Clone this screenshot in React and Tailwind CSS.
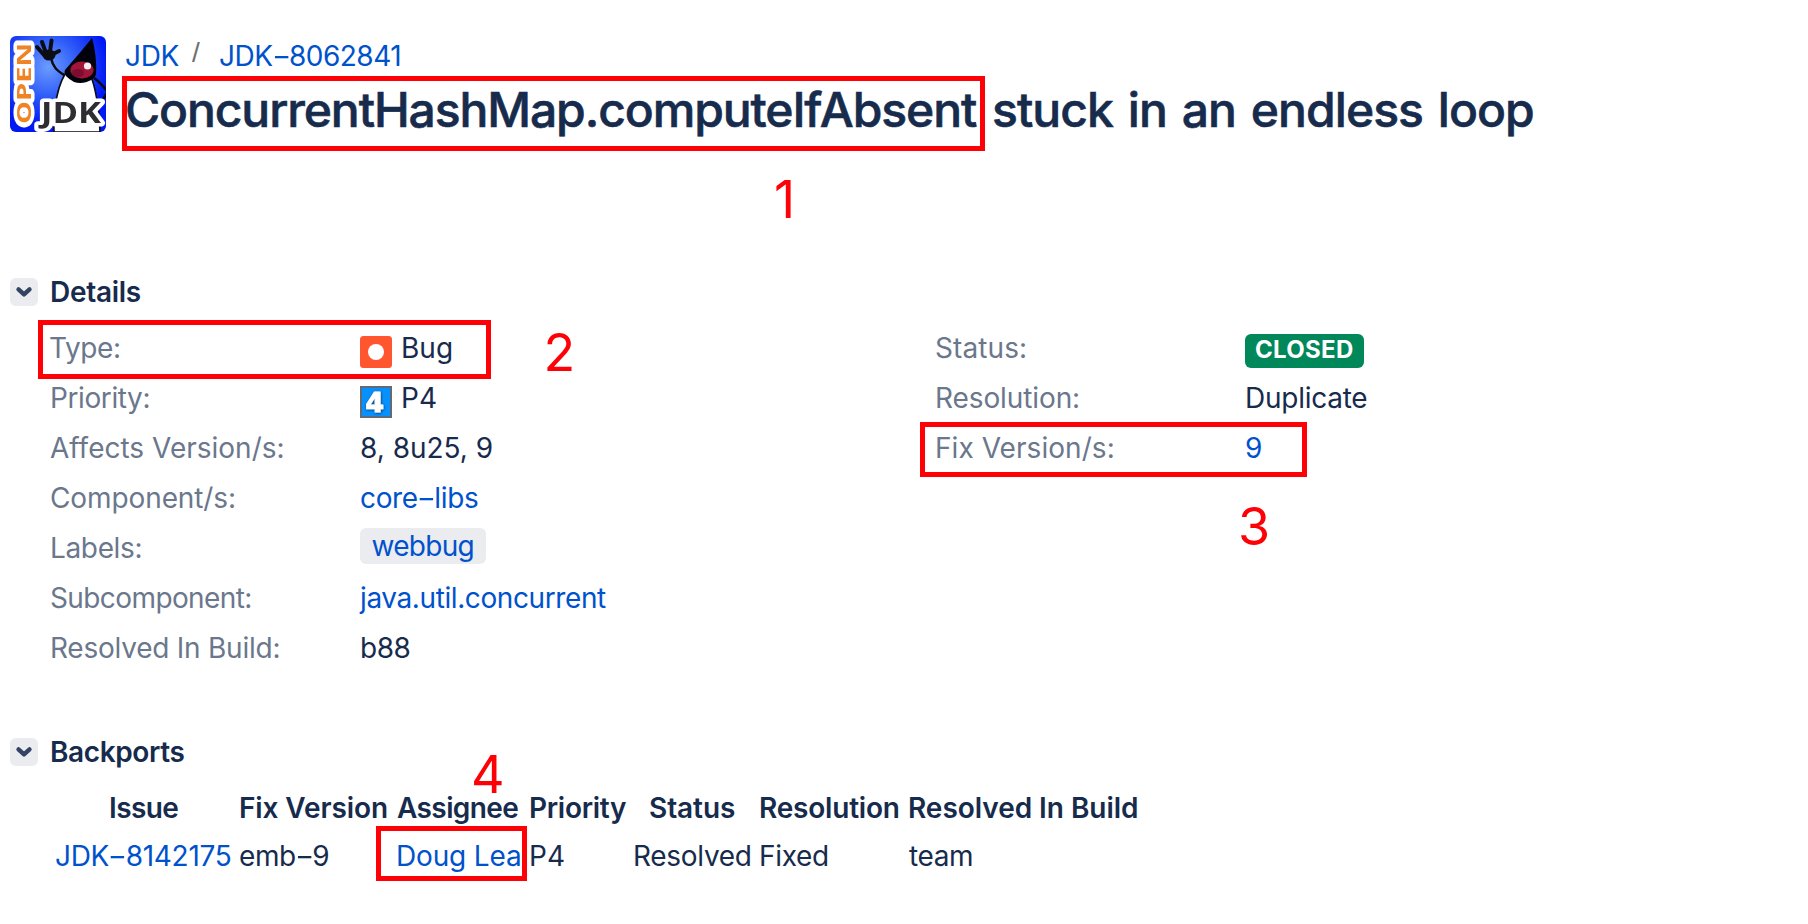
import React from "react";

const LINK = "text-[#0052cc]";

// A hyphen drawn wider than the typeface's own.
function Dash() {
  return <span className="mx-[2px] inline-block scale-x-150">-</span>;
}

function ProjectLogo() {
  return (
    <svg width="96" height="96" viewBox="0 0 96 96" className="shrink-0 rounded-md">
      <defs>
        <radialGradient id="sky" cx="0.4" cy="0.32" r="0.62">
          <stop offset="0" stopColor="#6c9cff" />
          <stop offset="0.5" stopColor="#2f5cf8" />
          <stop offset="1" stopColor="#0018f4" />
        </radialGradient>
        <filter id="soft" x="-10%" y="-10%" width="120%" height="120%">
          <feGaussianBlur stdDeviation="0.6" />
        </filter>
      </defs>
      <rect width="96" height="96" fill="url(#sky)" />
      <g filter="url(#soft)">
        <path d="M44 96 C43 72 48 46 58 34 L80 38 C86 52 89 74 90 96 Z" fill="#fff" stroke="#0a0a18" strokeWidth="1.600" />
        <path d="M82 2 C74 12 62 26 55 34 C53 39 58 42 64 46 C74 49 85 44 86 38 C87 28 85 12 82 2 Z" fill="#050508" />
        <path d="M84 42 C90 46 93 50 98 56 M90 68 L98 56" fill="none" stroke="#08080c" strokeWidth="2.600" />
        <path d="M41 22 C43 32 48 35 54 39" fill="none" stroke="#08080c" strokeWidth="2.400" />
        <path
          d="M34 19 L27 11 M36 17 L32 6 M40 16 L41.500 4.500 M43 18 L49 15"
          fill="none"
          stroke="#101018"
          strokeWidth="4"
          strokeLinecap="round"
        />
        <ellipse cx="39" cy="19" rx="6.500" ry="5.500" fill="#101018" />
        <ellipse cx="72" cy="34" rx="11.500" ry="8.500" fill="#a01238" />
        <ellipse cx="68" cy="37" rx="6" ry="4" fill="#7d0c2e" />
        <circle cx="77.500" cy="30" r="3.600" fill="#f4eef2" />
        <text
          transform="translate(21 88) rotate(-90)"
          textLength="81"
          lengthAdjust="spacingAndGlyphs"
          fontSize="20"
          fontWeight="700"
          fill="#ee8426"
          stroke="#fff"
          strokeWidth="7"
          strokeLinejoin="round"
          paintOrder="stroke"
          className="font-['Open_Sans',sans-serif]"
        >
          OPEN
        </text>
        <text
          x="31"
          y="87"
          textLength="60"
          lengthAdjust="spacingAndGlyphs"
          fontSize="29"
          fontWeight="700"
          fill="#2e2e32"
          stroke="#fff"
          strokeWidth="7"
          strokeLinejoin="round"
          paintOrder="stroke"
          className="font-['Open_Sans',sans-serif]"
        >
          JDK
        </text>
      </g>
    </svg>
  );
}

function SectionHeading({ children, tracking }) {
  return (
    <div className="flex h-[34px] items-center pl-[10px]">
      <button className="flex size-7 items-center justify-center rounded-md bg-[#ebecf0]">
        <svg width="28" height="28" viewBox="0 0 28 28" fill="none" stroke="#344563" strokeWidth="4.400" strokeLinecap="round" strokeLinejoin="round">
          <path d="M8.500 11.400 L14 16.400 L19.500 11.400" />
        </svg>
      </button>
      <h2 className={`ml-3 font-semibold leading-[34px] ${tracking}`}>{children}</h2>
    </div>
  );
}

function Row({ label, tracking = "", children }) {
  return (
    <div className="flex h-[50px] items-center">
      <dt className={`w-[310px] shrink-0 text-[#6b778c] ${tracking}`}>{label}</dt>
      <dd className="flex items-center">{children}</dd>
    </div>
  );
}

function BugIcon() {
  return (
    <svg width="32" height="32" viewBox="0 0 32 32" className="mr-[9px] translate-y-1">
      <rect width="32" height="32" rx="3.500" fill="#ff5630" />
      <circle cx="16" cy="16" r="8" fill="#fff" />
    </svg>
  );
}

function PriorityIcon() {
  return (
    <svg width="32" height="32" viewBox="0 0 32 32" className="mr-[9px] translate-y-1">
      <defs>
        <filter id="glow" x="-30%" y="-30%" width="160%" height="160%">
          <feDropShadow dx="0.4" dy="0.6" stdDeviation="1.1" floodColor="#0b2c4a" floodOpacity="1" />
        </filter>
      </defs>
      <rect x="1" y="1" width="30" height="30" fill="#0791ff" stroke="#5f6b78" strokeWidth="2" />
      <text
        x="5.500"
        y="25.500"
        textLength="18.500"
        lengthAdjust="spacingAndGlyphs"
        fontSize="27"
        fontWeight="700"
        fill="#fff"
        stroke="#fff"
        strokeWidth="1.200"
        strokeLinejoin="round"
        filter="url(#glow)"
        className="font-['DejaVu_Sans',sans-serif]"
      >
        4
      </text>
    </svg>
  );
}

function Marker({ box, digit, children }) {
  return (
    <>
      <div className={`pointer-events-none absolute border-[5px] border-[#ff0006] ${box}`} />
      <span className={`pointer-events-none absolute text-[52px] leading-none text-[#ff0006] ${digit}`}>{children}</span>
    </>
  );
}

export default function App() {
  return (
    <div className="relative h-[924px] w-full overflow-hidden bg-white pt-9 font-['Inter','Liberation_Sans',sans-serif] text-[28px] leading-[34px] text-[#172b4d]">
      <header className="flex h-[101px] pl-[10px]">
        <ProjectLogo />
        <div className="pt-[3px] pl-[19px]">
          <nav className={`flex h-[34px] whitespace-nowrap ${LINK}`}>
            <a className="w-[67px] tracking-[-0.3px]">JDK</a>
            <span className="w-[27px] -translate-y-[3px] font-['Liberation_Sans',sans-serif] text-[#707070]">/</span>
            <a className="tracking-[-0.5px]">
              JDK
              <Dash />
              8062841
            </a>
          </nav>
          <h1 className="mt-[9px] text-[48px] leading-[56px] font-medium whitespace-nowrap [-webkit-text-stroke:0.6px_#172b4d]">
            <span className="tracking-[-1.1px]">ConcurrentHashMap.computeIfAbsent</span>{" "}
            <span className="ml-[3px] tracking-[-0.94px] [word-spacing:3px]">stuck in an endless loop</span>
          </h1>
        </div>
      </header>

      <section className="mt-[138px]">
        <SectionHeading tracking="tracking-[-0.3px]">Details</SectionHeading>
        <div className="mt-[14px] flex pl-[50px] whitespace-nowrap">
          <dl className="w-[885px]">
            <Row label="Type:" tracking="-indent-px tracking-[-0.38px]">
              <BugIcon />
              <span>Bug</span>
            </Row>
            <Row label="Priority:" tracking="tracking-[-0.4px]">
              <PriorityIcon />
              <span>P4</span>
            </Row>
            <Row label="Affects Version/s:">
              <span>8, 8u25, 9</span>
            </Row>
            <Row label="Component/s:" tracking="tracking-[-0.1px]">
              <a className={`tracking-[-0.35px] ${LINK}`}>
                core
                <Dash />
                libs
              </a>
            </Row>
            <Row label="Labels:" tracking="tracking-[-0.35px]">
              <a className={`h-9 w-[126px] -translate-y-0.5 rounded-md bg-[#ebecf0] pl-[11.5px] leading-9 tracking-[-0.72px] ${LINK}`}>webbug</a>
            </Row>
            <Row label="Subcomponent:" tracking="tracking-[-0.6px]">
              <a className={`tracking-[-0.4px] ${LINK}`}>java.util.concurrent</a>
            </Row>
            <Row label="Resolved In Build:" tracking="tracking-[-0.24px]">
              <span className="tracking-[-0.5px]">b88</span>
            </Row>
          </dl>
          <dl>
            <Row label="Status:" tracking="tracking-[0.09px]">
              <span className="h-[34px] w-[119px] translate-y-[3px] rounded-md bg-[#00875a] pl-[10px] text-[24px] leading-[31px] font-bold tracking-[0.31px] text-white">
                CLOSED
              </span>
            </Row>
            <Row label="Resolution:" tracking="tracking-[-0.1px]">
              <span className="tracking-[-0.25px]">Duplicate</span>
            </Row>
            <Row label="Fix Version/s:" tracking="tracking-[0.05px]">
              <a className={LINK}>9</a>
            </Row>
          </dl>
        </div>
      </section>

      <section className="mt-[62px]">
        <SectionHeading tracking="tracking-[-0.4px]">Backports</SectionHeading>
        <div className="mt-[15px] grid grid-cols-[184px_156px_134px_104px_125px_150px_240px] pl-[55px] leading-[48px] whitespace-nowrap">
          <b className="pl-[54px] font-semibold tracking-[-0.6px]">Issue</b>
          <b className="font-semibold tracking-[-0.1px]">Fix Version</b>
          <b className="pl-[2px] font-semibold tracking-[-0.6px]">Assignee</b>
          <b className="font-semibold tracking-[-0.29px]">Priority</b>
          <b className="pl-4 font-semibold tracking-[-0.07px]">Status</b>
          <b className="pl-px font-semibold tracking-[-0.2px]">Resolution</b>
          <b className="font-semibold tracking-[-0.04px]">Resolved In Build</b>
          <a className={`tracking-[-0.3px] ${LINK}`}>
            JDK
            <Dash />
            8142175
          </a>
          <span className="tracking-[-0.4px]">
            emb
            <Dash />9
          </span>
          <a className={`pl-px tracking-[-0.15px] ${LINK}`}>Doug Lea</a>
          <span>P4</span>
          <span className="tracking-[-0.3px]">Resolved</span>
          <span className="pl-px tracking-[-0.3px]">Fixed</span>
          <span className="pl-px tracking-[-0.4px]">team</span>
        </div>
      </section>

      <Marker box="left-[122px] top-[76px] h-[75px] w-[863px]" digit="left-[774px] top-[174px]">1</Marker>
      <Marker box="left-[38px] top-[320px] h-[59px] w-[453px]" digit="left-[543.5px] top-[327px]">2</Marker>
      <Marker box="left-[920px] top-[422px] h-[55px] w-[387px]" digit="left-[1238px] top-[501px]">3</Marker>
      <Marker box="left-[376px] top-[826px] h-[55px] w-[151px]" digit="left-[471px] top-[749px]">4</Marker>
    </div>
  );
}
